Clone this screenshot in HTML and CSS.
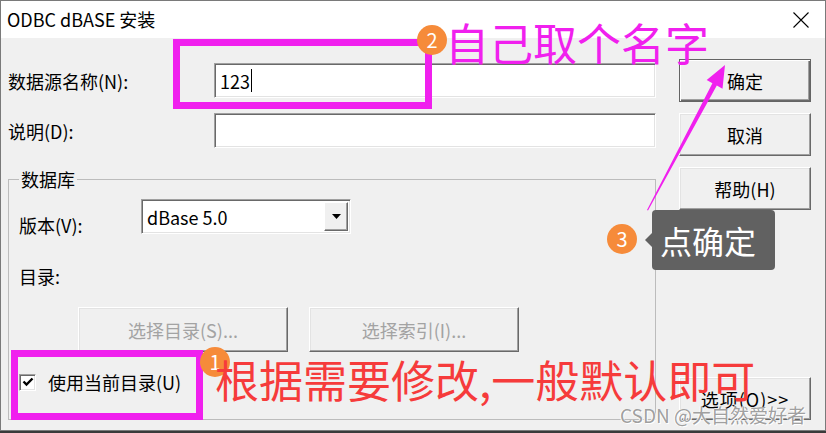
FILE: index.html
```html
<!DOCTYPE html>
<html lang="zh-CN">

<head>
    <meta charset="UTF-8">
    <meta name="viewport" content="width=device-width, initial-scale=1.0">
    <title>ODBC dBASE 安装</title>
    <link rel="stylesheet" href="styles.css">
</head>

<body>
    <div class="window">
        <!-- Title bar -->
        <div class="titlebar">
            <span class="title">ODBC dBASE 安装</span>
            <svg class="close" width="16" height="16" viewBox="0 0 16 16">
                <path d="M0.5 0.5 L15.5 15.5 M15.5 0.5 L0.5 15.5" stroke="#000" stroke-width="1.1" fill="none" />
            </svg>
        </div>

        <div class="content">
            <!-- Left side: form fields and group -->
            <div class="main">
                <div class="form-grid">
                    <span class="label">数据源名称(N):</span>
                    <div class="field"><span class="value">123</span><span class="caret"></span></div>
                    <span class="label">说明(D):</span>
                    <div class="field"></div>
                </div>

                <fieldset class="group">
                    <legend>数据库</legend>
                    <div class="version-row">
                        <span class="label">版本(V):</span>
                        <div class="field combo">
                            <span class="value">dBase 5.0</span>
                            <span class="combo-btn">
                                <svg width="9" height="5" viewBox="0 0 9 5"><path d="M0 0 H9 L4.5 5 Z" fill="#000" /></svg>
                            </span>
                        </div>
                    </div>
                    <div class="dir-row"><span class="label">目录:</span></div>
                    <div class="dir-buttons">
                        <button class="btn disabled">选择目录(S)...</button>
                        <button class="btn disabled">选择索引(I)...</button>
                    </div>
                    <div class="check-row">
                        <span class="checkbox">
                            <svg width="12" height="12" viewBox="0 0 12 12"><path d="M1.5 5.5 L4.5 8.5 L10.5 2.5" stroke="#000" stroke-width="2.4" fill="none" /></svg>
                        </span>
                        <span>使用当前目录(U)</span>
                    </div>
                </fieldset>
            </div>

            <!-- Right side: dialog buttons -->
            <div class="side">
                <button class="btn default">确定</button>
                <button class="btn">取消</button>
                <button class="btn">帮助(H)</button>
                <button class="btn options">选项(O)&gt;&gt;</button>
            </div>
        </div>

        <!-- Annotations drawn over the dialog -->
        <div class="mark-box mark-name"></div>
        <div class="mark-box mark-check"></div>
        <div class="badge badge-1">1</div>
        <div class="badge badge-2">2</div>
        <div class="badge badge-3">3</div>
        <div class="note note-name">自己取个名字</div>
        <div class="note note-default">根据需要修改,一般默认即可</div>
        <div class="tip">点确定</div>
        <svg class="arrow" width="826" height="433" viewBox="0 0 826 433">
            <polygon points="647,210 712.4,83.2 706.7,80.1 725,65 722.5,88.7 716.8,85.6 648,210.5" fill="#f020ee" />
        </svg>
        <div class="watermark">CSDN @大自然爱好者</div>
    </div>
</body>

</html>
```

FILE: styles.css
```css
/* Page and window frame */
body {
    margin: 0;
    background-color: #3a3a3a;
    font-family: "Noto Sans CJK SC", "Noto Sans", sans-serif;
    font-size: 18px;
    color: #000;
}

.window {
    position: relative;
    width: 826px;
    height: 431px;
    box-sizing: border-box;
    border: 1px solid #7a7a7a;
    background-color: #f0f0f0;
    display: flex;
    flex-direction: column;
    overflow: hidden;
}

/* Title bar */
.titlebar {
    height: 37px;
    background-color: #fff;
    display: flex;
    align-items: center;
    justify-content: space-between;
    padding: 0 16px 0 6px;
}

.title {
    font-size: 18px;
    line-height: 1;
    padding-bottom: 2px;
}

/* Body of the dialog */
.content {
    flex: 1;
    display: flex;
}

.main {
    width: 655px;
    box-sizing: border-box;
    padding-left: 7px;
    display: flex;
    flex-direction: column;
}

.form-grid {
    display: grid;
    grid-template-columns: 206px 442px;
    grid-auto-rows: 35px;
    row-gap: 15px;
    padding-top: 25px;
    align-items: center;
}

.label {
    line-height: 26px;
}

/* Sunken edit field */
.field {
    height: 35px;
    box-sizing: border-box;
    background-color: #fff;
    border: 1px solid;
    border-color: #a0a0a0 #fff #fff #a0a0a0;
    box-shadow: inset 1px 1px 0 #696969, inset -1px -1px 0 #e3e3e3;
    display: flex;
    align-items: center;
    padding-left: 5px;
}

.value {
    line-height: 22px;
}

.caret {
    width: 1px;
    height: 23px;
    background-color: #000;
    margin-left: 1px;
}

/* Group box */
.group {
    flex: 1;
    margin: 18px 0 10px 0;
    padding: 0 10px;
    border: 1px solid #bcbcbc;
    min-width: 0;
}

.group legend {
    padding: 0 2px;
    margin-left: 0;
    line-height: 26px;
}

.version-row {
    display: grid;
    grid-template-columns: 122px 210px;
    align-items: center;
    margin-top: 7px;
}

.version-row .label {
    align-self: end;
    margin-bottom: -4px;
}

.combo {
    padding-right: 2px;
    justify-content: space-between;
}

.combo-btn {
    width: 24px;
    height: 29px;
    box-sizing: border-box;
    background-color: #f0f0f0;
    border: 1px solid;
    border-color: #fff #696969 #696969 #fff;
    box-shadow: inset -1px -1px 0 #a0a0a0;
    display: flex;
    align-items: center;
    justify-content: center;
}

.dir-row {
    margin-top: 29px;
}

.dir-buttons {
    display: flex;
    gap: 21px;
    margin: 18px 0 0 59px;
}

.dir-buttons .btn {
    width: 210px;
    height: 45px;
}

.check-row {
    display: flex;
    align-items: center;
    gap: 12px;
    margin-top: 17px;
}

.checkbox {
    width: 17px;
    height: 17px;
    box-sizing: border-box;
    background-color: #fff;
    border: 1px solid;
    border-color: #a0a0a0 #fff #fff #a0a0a0;
    box-shadow: inset 1px 1px 0 #696969, inset -1px -1px 0 #e3e3e3;
    display: flex;
    align-items: center;
    justify-content: center;
}

/* Raised push buttons */
.btn {
    font-family: inherit;
    font-size: 18px;
    color: #000;
    background-color: #f0f0f0;
    border: 1px solid;
    border-color: #fff #696969 #696969 #fff;
    box-shadow: inset -1px -1px 0 #a0a0a0, inset 1px 1px 0 #e3e3e3;
    padding: 0;
    cursor: pointer;
}

.btn.disabled {
    color: #a3a3a3;
}

.btn.default {
    border-color: #646464;
    box-shadow: inset 1px 1px 0 #fff, inset -1px -1px 0 #696969, inset -2px -2px 0 #a0a0a0;
}

.side {
    width: 132px;
    margin-left: 23px;
    padding: 21px 0 10px;
    display: flex;
    flex-direction: column;
    gap: 11px;
}

.side .btn {
    height: 43px;
}

.side .options {
    margin-top: auto;
    letter-spacing: 1px;
}

/* Annotation layer */
.mark-box {
    position: absolute;
    box-sizing: border-box;
    border: 7px solid #f020ee;
}

.mark-name {
    left: 172px;
    top: 38px;
    width: 259px;
    height: 70px;
}

.mark-check {
    left: 10px;
    top: 349px;
    width: 192px;
    height: 70px;
}

.badge {
    position: absolute;
    width: 30px;
    height: 30px;
    border-radius: 50%;
    background-color: #f68b3a;
    color: #fff;
    font-size: 20px;
    line-height: 30px;
    text-align: center;
}

.badge-1 {
    left: 199px;
    top: 346px;
}

.badge-2 {
    left: 416px;
    top: 24px;
}

.badge-3 {
    left: 606px;
    top: 223px;
}

.note {
    position: absolute;
    font-size: 44px;
    line-height: 1;
    white-space: nowrap;
}

.note-name {
    left: 444px;
    top: 19px;
    color: #f020ee;
}

.note-default {
    left: 214px;
    top: 356px;
    color: #f63b3b;
}

.tip {
    position: absolute;
    left: 651px;
    top: 209px;
    width: 123px;
    height: 60px;
    box-sizing: border-box;
    padding-left: 8px;
    border-radius: 4px;
    background-color: #616161;
    color: #fff;
    font-size: 32px;
    line-height: 60px;
}

.tip::before {
    content: "";
    position: absolute;
    left: -7px;
    top: 23px;
    border-style: solid;
    border-width: 7px 7px 7px 0;
    border-color: transparent #616161 transparent transparent;
}

.arrow {
    position: absolute;
    left: -1px;
    top: -1px;
}

.watermark {
    position: absolute;
    left: 619px;
    top: 400px;
    font-size: 19px;
    color: #a0a0a0;
    text-shadow: 1px 1px 0 #fff, -1px 0 0 #fff;
    white-space: nowrap;
}
```
